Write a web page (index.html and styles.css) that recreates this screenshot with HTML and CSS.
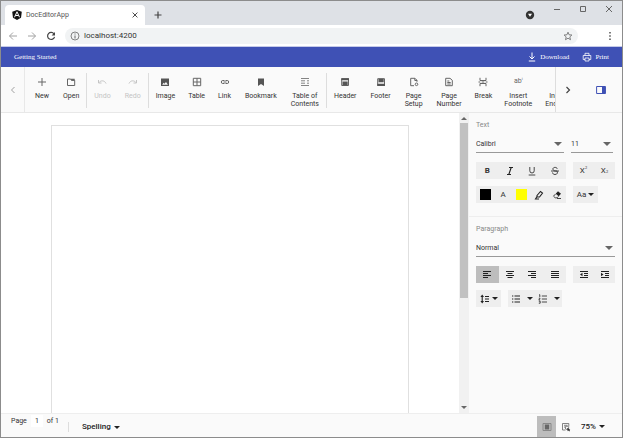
FILE: index.html
```html
<!DOCTYPE html>
<html lang="en">
<head>
    <meta charset="UTF-8">
    <meta name="viewport" content="width=device-width, initial-scale=1.0">
    <title>DocEditorApp</title>
    <link rel="stylesheet" href="styles.css">
</head>
<body>

<div class="window">
    <!-- Browser tabs -->
    <div class="tab-strip">
        <div class="tab">
            <svg class="logo" viewBox="0 0 20 20"><path fill="#111" d="M10 0l9.500 3.400-1.500 12.200L10 20l-8-4.400L.5 3.400z"/><path fill="none" stroke="#fff" stroke-width="2" d="M5 14.500L10 3.500l5 11M7 11h6"/></svg>
            <span class="tab-title">DocEditorApp</span>
            <button class="plain" aria-label="Close tab"><svg class="icon-small" viewBox="0 0 10 10"><path class="line-heavy" d="M2 2l6 6M8 2L2 8"/></svg></button>
        </div>
        <button class="plain new-tab" aria-label="New tab"><svg class="icon" viewBox="0 0 10 10"><path class="line-heavy" d="M5 1.500v7M1.500 5h7"/></svg></button>
        <div class="window-buttons">
            <button class="plain guest" aria-label="Tab search"><svg class="icon" viewBox="0 0 10 10"><circle cx="5" cy="5" r="4.200" fill="#333"/><path fill="#fff" d="M3 3.800h4L5 6.800z"/></svg></button>
            <button class="plain" aria-label="Minimize"><svg class="icon-small" viewBox="0 0 8 8"><path class="line" d="M1 4.500h6"/></svg></button>
            <button class="plain" aria-label="Maximize"><svg class="icon-small" viewBox="0 0 8 8"><path class="line" d="M1.500 1.500h5v5h-5z"/></svg></button>
            <button class="plain" aria-label="Close"><svg class="icon-small" viewBox="0 0 8 8"><path class="line" d="M1 1l6 6M7 1L1 7"/></svg></button>
        </div>
    </div>

    <!-- Address bar -->
    <div class="address-row">
        <button class="plain faded" aria-label="Back"><svg class="icon" viewBox="0 0 10 10"><path class="line" d="M9 5H1.500M5 1.500L1.500 5 5 8.500"/></svg></button>
        <button class="plain faded" aria-label="Forward"><svg class="icon" viewBox="0 0 10 10"><path class="line" d="M1 5h7.500M5 1.500L8.500 5 5 8.500"/></svg></button>
        <button class="plain" aria-label="Reload"><svg class="icon" viewBox="0 0 10 10"><path class="line-heavy" d="M8 3A3.500 3.500 0 1 0 8.500 5.800"/><path fill="#444" d="M9 1v3.400H5.600z"/></svg></button>
        <div class="address">
            <svg class="icon" viewBox="0 0 10 10"><circle class="line-thin" cx="5" cy="5" r="4"/><path class="line" d="M5 4.500v3M5 2.500v1"/></svg>
            <input class="url" type="text" value="localhost:4200" aria-label="Address">
            <button class="plain" aria-label="Bookmark this page"><svg class="icon" viewBox="0 0 10 10"><path class="line-thin" d="M5 1.200l1.100 2.600 2.800.2-2.100 1.900.7 2.800L5 7.200 2.500 8.700l.7-2.800L1.100 4l2.800-.2z"/></svg></button>
        </div>
        <button class="plain" aria-label="Browser menu"><svg class="icon" viewBox="0 0 10 10"><path fill="#444" d="M4.300 1h1.400v1.400H4.300zM4.300 4.300h1.400v1.400H4.300zM4.300 7.600h1.400V9H4.300z"/></svg></button>
    </div>

    <!-- Title bar -->
    <header class="title-bar">
        <span class="doc-name">Getting Started</span>
        <button class="title-button"><svg class="icon" viewBox="0 0 10 10"><path class="line" d="M5 .5v6M2.500 4.500L5 7l2.500-2.500M1.800 9h6.400"/></svg>Download</button>
        <button class="title-button"><svg class="icon" viewBox="0 0 10 10"><path class="line-thin" d="M3 3.500V1.300h4v2.200M3 7.500H1.200v-4h7.600v4H7M3 6h4v3H3z"/></svg>Print</button>
    </header>

    <!-- Toolbar -->
    <div class="toolbar">
        <button class="nav prev" aria-label="Scroll left"><svg class="icon" viewBox="0 0 10 10"><path class="line" d="M6.500 2L3.500 5l3 3"/></svg></button>
        <div class="tools">
            <button class="tool"><svg class="icon" viewBox="0 0 10 10"><path class="line" d="M5 1v8M1 5h8"/></svg>New</button>
            <button class="tool"><svg class="icon" viewBox="0 0 10 10"><path class="line" d="M1.500 2h3l1 1.300h3.200v5.200H1.500z"/><path fill="#666" d="M4.500 1.800h4.200v2H5.500z"/></svg>Open</button>
            <span class="separator"></span>
            <button class="tool" disabled><svg class="icon" viewBox="0 0 10 10"><path class="line" d="M1.500 3v3h3M1.800 5.700C4 3 7.500 3.200 9 6.500"/></svg>Undo</button>
            <button class="tool" disabled><svg class="icon" viewBox="0 0 10 10"><path class="line" d="M8.500 3v3h-3M8.200 5.700C6 3 2.500 3.200 1 6.500"/></svg>Redo</button>
            <span class="separator"></span>
            <button class="tool"><svg class="icon" viewBox="0 0 10 10"><path fill="#555" fill-rule="evenodd" d="M1 1.500h8v7.500H1zM2.200 7.800h5.700L6 5 4.500 6.700 3.600 5.800z"/></svg>Image</button>
            <button class="tool narrow"><svg class="icon" viewBox="0 0 10 10"><path class="line" d="M1.300 1.300h7.400v7.400H1.300zM5 1.300v7.400M1.300 5h7.400"/></svg>Table</button>
            <button class="tool"><svg class="icon" viewBox="0 0 10 10"><path class="line" d="M4.500 3.500H2.800a1.500 1.500 0 0 0 0 3h1.700M5.500 3.500h1.700a1.500 1.500 0 0 1 0 3H5.500M3.500 5h3"/></svg>Link</button>
            <button class="tool"><svg class="icon" viewBox="0 0 10 10"><path fill="#555" d="M2 1.500h6V9L5 7 2 9z"/></svg>Bookmark</button>
            <button class="tool"><svg class="icon" viewBox="0 0 10 10"><path class="line-thin" d="M1 1.500h8M1 3.800h4M1 6.200h4M1 8.500h8M7 3.800h2M7 6.200h2"/></svg>Table of<br>Contents</button>
            <span class="separator"></span>
            <button class="tool"><svg class="icon" viewBox="0 0 10 10"><path class="line" d="M1.700 1.700h6.800v6.800H1.700z"/><path fill="#555" d="M1.300 1.200H9v2H1.300zM2.500 4.500h5.200v4H2.500z"/></svg>Header</button>
            <button class="tool"><svg class="icon" viewBox="0 0 10 10"><path class="line" d="M1.700 1.700h6.800v6.800H1.700z"/><path fill="#555" d="M2.500 1.800h5.200v3.500H2.500zM1.300 6.800H9v2.200H1.300z"/></svg>Footer</button>
            <button class="tool"><svg class="icon" viewBox="0 0 10 10"><path class="line" d="M5 8.700H1.700V1.300H6l2 2v1.500M5.800 1.500v2H8"/><circle class="line" cx="7.500" cy="7.300" r="1.300"/></svg>Page<br>Setup</button>
            <button class="tool"><svg class="icon" viewBox="0 0 10 10"><path class="line" d="M1.700 1.300H6l2.300 2v5.400H1.700zM3.300 4h2M3.300 5.500h3.400M3.300 7h3.400"/></svg>Page<br>Number</button>
            <button class="tool narrow"><svg class="icon" viewBox="0 0 10 10"><path class="line" d="M2 .8v2.700h6V.8M2 9.200V6.500h6v2.700M.5 5h1.800M3.700 5h2.600M7.700 5h1.800"/></svg>Break</button>
            <button class="tool narrow"><span class="glyph">ab<sup>i</sup></span>Insert<br>Footnote</button>
            <button class="tool"><span class="glyph"></span>Insert<br>Endnote</button>
        </div>
        <button class="nav next" aria-label="Scroll right"><svg class="icon" viewBox="0 0 10 10"><path class="line-heavy" d="M3.500 2l3 3-3 3"/></svg></button>
        <button class="panel-toggle" aria-label="Show properties pane"><svg class="icon" viewBox="0 0 10 10"><path fill="none" stroke="#3f51b5" d="M.6 1.500h8.800v7H.6z"/><path fill="#3f51b5" d="M6 1.500h3.500v7H6z"/></svg></button>
    </div>

    <main class="main">
        <div class="editor">
            <div class="page"></div>
        </div>
        <div class="scrollbar">
            <span class="arrow up"></span>
            <div class="thumb"></div>
            <span class="arrow"></span>
        </div>

        <!-- Properties pane -->
        <aside class="panel">
            <section class="text-section">
                <h2>Text</h2>
                <div class="row">
                    <div class="select-box font-name">
                        <select aria-label="Font"><option>Calibri</option></select>
                        <span class="arrow"></span>
                    </div>
                    <div class="select-box font-size">
                        <select aria-label="Font size"><option>11</option></select>
                        <span class="arrow"></span>
                    </div>
                </div>
                <div class="row">
                    <div class="group wide">
                        <button aria-label="Bold"><b>B</b></button>
                        <button aria-label="Italic"><svg class="icon" viewBox="0 0 10 10"><path class="ink" d="M4 1.500h4M2 8.500h4M6.200 1.500l-2.400 7"/></svg></button>
                        <button aria-label="Underline"><svg class="icon" viewBox="0 0 10 10"><path class="ink-thin" d="M2.800 1v3.800a2.200 2.200 0 0 0 4.400 0V1M1.700 9h6.600"/></svg></button>
                        <button aria-label="Strikethrough"><svg class="icon" viewBox="0 0 10 10"><path class="ink-thin" d="M7.300 3C7 .8 2.900.9 2.900 3c0 .9.700 1.500 2 2h2c1 1.300.700 3.500-1.900 3.500-1.500 0-2.400-.8-2.500-2M1 5h8"/></svg></button>
                    </div>
                    <div class="group script">
                        <button aria-label="Superscript"><span>X<sup>2</sup></span></button>
                        <button aria-label="Subscript"><span>X<sub>2</sub></span></button>
                    </div>
                </div>
                <div class="row">
                    <div class="group wide">
                        <button aria-label="Font color"><span class="swatch black"></span></button>
                        <button aria-label="Text effect">A</button>
                        <button aria-label="Highlight color"><span class="swatch yellow"></span></button>
                        <button aria-label="Highlighter"><svg class="icon" viewBox="0 0 10 10"><path class="ink" d="M3 5.500L6.500 1.500l2 1.500-3 4H3zM3 6.500L1.500 9H5"/></svg></button>
                        <button aria-label="Clear formatting"><svg class="icon" viewBox="0 0 10 10"><path fill="#222" d="M6 1.200l3 2.500-2.300 2.500-3-2.500z"/><path class="ink-thin" d="M3.500 4L1.500 6.200l1.700 1.600h2l1.300-1.500M5 8.500h4"/></svg></button>
                    </div>
                    <div class="group single">
                        <button aria-label="Change case">Aa<span class="arrow small"></span></button>
                    </div>
                </div>
            </section>

            <section>
                <h2>Paragraph</h2>
                <div class="row">
                    <div class="select-box style-name">
                        <select aria-label="Style"><option>Normal</option></select>
                        <span class="arrow"></span>
                    </div>
                </div>
                <div class="row">
                    <div class="group wide">
                        <button class="active" aria-label="Align left"><svg class="icon" viewBox="0 0 10 10"><path class="ink" d="M1 1.500h8M1 3.500h5M1 5.500h8M1 7.500h5"/></svg></button>
                        <button aria-label="Align center"><svg class="icon" viewBox="0 0 10 10"><path class="ink" d="M1 1.500h8M2.500 3.500h5M1 5.500h8M2.500 7.500h5"/></svg></button>
                        <button aria-label="Align right"><svg class="icon" viewBox="0 0 10 10"><path class="ink" d="M1 1.500h8M4 3.500h5M1 5.500h8M4 7.500h5"/></svg></button>
                        <button aria-label="Justify"><svg class="icon" viewBox="0 0 10 10"><path class="ink" d="M1 1.500h8M1 3.500h8M1 5.500h8M1 7.500h8"/></svg></button>
                    </div>
                    <div class="group script">
                        <button aria-label="Decrease indent"><svg class="icon" viewBox="0 0 10 10"><path class="ink" d="M1 1.500h8M5 3.500h4M5 5.500h4M1 7.500h8"/><path fill="#222" d="M3.500 2.800v3.400L1 4.500z"/></svg></button>
                        <button aria-label="Increase indent"><svg class="icon" viewBox="0 0 10 10"><path class="ink" d="M1 1.500h8M5 3.500h4M5 5.500h4M1 7.500h8"/><path fill="#222" d="M1 2.800v3.400l2.500-1.700z"/></svg></button>
                    </div>
                </div>
                <div class="row">
                    <div class="group single">
                        <button aria-label="Line spacing"><svg class="icon" viewBox="0 0 10 10"><path class="ink" d="M2.200 2v6M5 2.500h4M5 5h4M5 7.500h4"/><path fill="#222" d="M2.200.5L4 3H.4zM2.200 9.500L4 7H.4z"/></svg><span class="arrow small"></span></button>
                    </div>
                    <div class="group lists">
                        <button aria-label="Bullets"><svg class="icon" viewBox="0 0 10 10"><path class="ink" d="M1 2h1.300M1 5h1.300M1 8h1.300M3.500 2H9M3.500 5H9M3.500 8H9"/></svg><span class="arrow small"></span></button>
                        <button aria-label="Numbering"><svg class="icon" viewBox="0 0 10 10"><path class="ink-thin" d="M1 1l.8-.3V3M.8 4.200h1.300L.8 6h1.400M.8 7.200h1.400v2H.8M3.800 2H9M3.800 5H9M3.800 8H9"/></svg><span class="arrow small"></span></button>
                    </div>
                </div>
            </section>
        </aside>
    </main>

    <!-- Status bar -->
    <footer class="status-bar">
        <label class="page-count">Page <input type="text" value="1"> of 1</label>
        <button class="spelling">Spelling<span class="arrow small"></span></button>
        <div class="view-buttons">
            <button class="view active" aria-label="Print layout"><svg class="icon" viewBox="0 0 10 10"><path fill="none" stroke="#888" d="M1 1.500h8v7H1z"/><path fill="#666" d="M2.800 2.500h4.400v5H2.800z"/></svg></button>
            <button class="view" aria-label="Web layout"><svg class="icon" viewBox="0 0 10 10"><path class="line-thin" d="M4.500 8H1.500V1.500h6.300v3M3 3.300h3.500M3 5h2"/><circle class="line-thin" cx="6" cy="5.800" r="1.700"/><path fill="#333" d="M6 6l3.300 1.200-1 .6.700 1-.8.600-.7-1-.8.800z"/></svg></button>
            <button class="zoom">75%<span class="arrow small"></span></button>
        </div>
    </footer>
</div>

</body>
</html>
```
FILE: styles.css
```css
/* General Styles */
* {
    box-sizing: border-box;
}
body {
    margin: 0;
    font-family: Roboto, sans-serif;
    font-size: 7px;
    line-height: 8px;
    color: #333;
}
button, input, select {
    font: inherit;
    color: inherit;
    background: none;
    border: none;
    padding: 0;
    margin: 0;
}
button {
    display: flex;
    align-items: center;
    justify-content: center;
    cursor: pointer;
}
.window {
    display: flex;
    flex-direction: column;
    height: 100vh;
    border: 1px solid #8c8c8c;
    background-color: #fff;
}

/* Icons */
.icon {
    width: 10px;
    height: 10px;
    flex: none;
}
.icon-small {
    width: 8px;
    height: 8px;
}
.line, .line-thin, .line-heavy, .ink, .ink-thin {
    fill: none;
    stroke: #666;
    stroke-width: 1;
}
.line-thin {
    stroke-width: 0.8;
}
.line-heavy {
    stroke: #444;
    stroke-width: 1.2;
}
.ink {
    stroke: #222;
    stroke-width: 1.1;
}
.ink-thin {
    stroke: #333;
    stroke-width: 0.9;
}
.arrow {
    border: 4px solid transparent;
    border-top-color: #666;
    border-bottom: none;
}
.arrow.small {
    border-width: 3px 3px 0;
    border-top-color: #222;
}

/* Browser */
.tab-strip {
    display: flex;
    height: 24px;
    padding: 4px 9px 0 4px;
    background-color: #dee1e6;
}
.tab {
    display: flex;
    align-items: center;
    width: 140px;
    padding: 0 6px 0 7px;
    background-color: #fff;
    border-radius: 4px 4px 0 0;
}
.logo {
    width: 10px;
    height: 10px;
    margin-right: 4px;
}
.tab-title {
    flex: 1;
    color: #555;
}
.new-tab {
    margin-left: 8px;
}
.window-buttons {
    display: flex;
    align-items: flex-start;
    gap: 18px;
    margin-left: auto;
}
.guest {
    margin-top: 5px;
}
.address-row {
    display: flex;
    align-items: center;
    gap: 9px;
    height: 22px;
    padding: 0 7px;
    border-bottom: 1px solid #c5cae9;
}
.faded {
    opacity: 0.6;
}
.address {
    display: flex;
    align-items: center;
    flex: 1;
    gap: 4px;
    height: 16px;
    margin-right: 18px;
    padding: 0 5px;
    background-color: #f1f3f4;
    border-radius: 8px;
}
.url {
    flex: 1;
    font-size: 8px;
}

/* Title bar */
.title-bar {
    display: flex;
    align-items: center;
    flex: none;
    gap: 13px;
    height: 20px;
    padding: 0 13px;
    background-color: #3f51b5;
    color: #fff;
    font-family: "Liberation Serif", serif;
}
.doc-name {
    flex: 1;
}
.title-button {
    gap: 3px;
}
.title-button .line, .title-button .line-thin {
    stroke: #fff;
}

/* Toolbar */
.toolbar {
    display: flex;
    flex: none;
    height: 46px;
    background-color: #fafafa;
    border-bottom: 1px solid #e8e8e8;
}
.nav {
    width: 23px;
}
.prev {
    opacity: 0.6;
}
.tools {
    display: flex;
    flex: 1;
    min-width: 0;
    padding: 6px 0 4px 3px;
    overflow: hidden;
    border-left: 1px solid #e8e8e8;
    border-right: 1px solid #ddd;
}
.tool {
    flex: none;
    flex-direction: column;
    justify-content: flex-start;
    padding: 4px 7px 0;
}
.tool .icon, .glyph {
    height: 10px;
    margin-bottom: 5px;
}
.tool.narrow {
    padding: 4px 6px 0;
}
.tool:disabled {
    color: #c4c4c4;
}
.tool:disabled .line {
    stroke: #c4c4c4;
}
.glyph {
    color: #666;
}
sup, sub {
    font-size: 4px;
    line-height: 0;
}
sub {
    vertical-align: baseline;
}
.separator {
    flex: none;
    width: 1px;
    background-color: #ddd;
}
.panel-toggle {
    width: 43px;
}

/* Document */
.main {
    display: flex;
    flex: 1;
    min-height: 0;
}
.editor {
    display: flex;
    flex: 1;
    padding: 12px 50px 0;
}
.page {
    flex: 1;
    border: 1px solid #e0e0e0;
    border-bottom: none;
}
.scrollbar {
    display: flex;
    flex-direction: column;
    align-items: center;
    width: 10px;
    padding: 4px 1px;
    background-color: #f1f1f1;
}
.scrollbar .arrow {
    border-width: 3px 3px 0;
}
.scrollbar .arrow.up {
    margin-bottom: 3px;
    transform: rotate(180deg);
}
.thumb {
    width: 100%;
    height: 60%;
    margin-bottom: auto;
    background-color: #c1c1c1;
}

/* Properties pane */
.panel {
    width: 153px;
    background-color: #fafafa;
}
.panel section {
    padding: 8px 7px 0;
}
.panel .text-section {
    padding-bottom: 13px;
    border-bottom: 1px solid #eee;
}
h2 {
    margin: 0 0 6px;
    color: #888;
    font-size: 7px;
    font-weight: normal;
}
.row {
    display: flex;
    gap: 7px;
    margin-bottom: 7px;
}
.text-section .row:last-child {
    margin-bottom: 0;
}
.select-box {
    display: flex;
    align-items: center;
    height: 18px;
    margin-bottom: 2px;
    padding-right: 2px;
    border-bottom: 1px solid #999;
}
.select-box select {
    flex: 1;
    min-width: 0;
    appearance: none;
}
.font-name {
    width: 88px;
}
.font-size {
    width: 42px;
}
.style-name {
    flex: 1;
}
.group {
    display: flex;
    height: 17px;
    background-color: #eee;
    color: #333;
}
.group button {
    flex: 1;
    gap: 2px;
    font-size: 8px;
}
.wide {
    width: 90px;
}
.script {
    width: 42px;
}
.single {
    width: 25px;
}
.lists {
    width: 54px;
}
.lists button {
    gap: 6px;
}
.group .active, .view.active {
    background-color: #bdbdbd;
}
.swatch {
    width: 11px;
    height: 11px;
}
.black {
    background-color: #000;
}
.yellow {
    background-color: #ff0;
}

/* Status bar */
.status-bar {
    display: flex;
    flex: none;
    height: 24px;
    padding: 2px 11px 0 10px;
    background-color: #fafafa;
    border-top: 1px solid #eee;
}
.page-count {
    display: flex;
    align-items: center;
    gap: 4px;
    height: 10px;
}
.page-count input {
    width: 12px;
    height: 12px;
    background-color: #fff;
    text-align: center;
}
.spelling {
    gap: 3px;
    height: 10px;
    margin: 6px 0 0 9px;
    padding-left: 13px;
    border-left: 1px solid #ddd;
}
.spelling, .zoom {
    font-size: 8px;
    font-weight: 500;
    color: #222;
}
.view-buttons {
    display: flex;
    margin-left: auto;
}
.view {
    width: 19px;
}
.zoom {
    gap: 3px;
    width: 36px;
}
```
